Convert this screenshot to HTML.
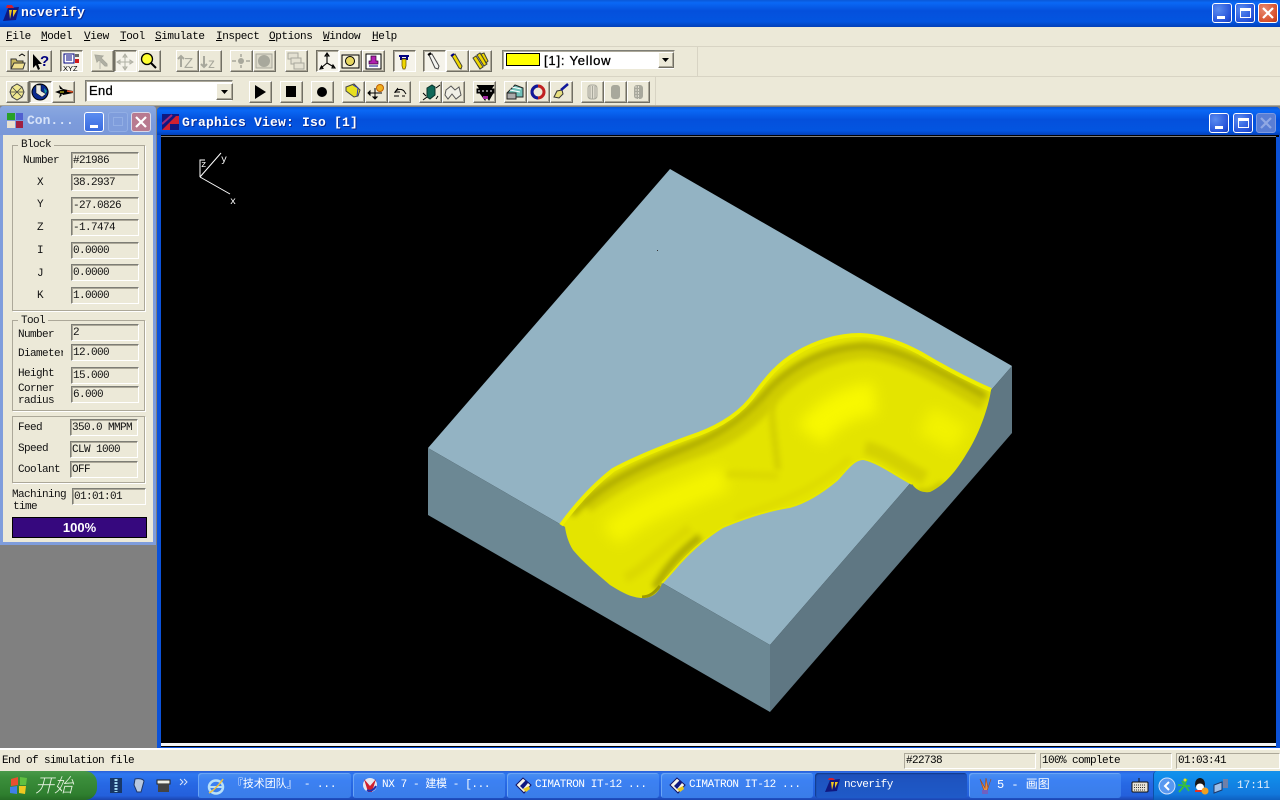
<!DOCTYPE html>
<html><head><meta charset="utf-8"><title>ncverify</title>
<style>
html,body{margin:0;padding:0;width:1280px;height:800px;overflow:hidden;background:#ece9d8}
*{box-sizing:border-box}
div,span{position:absolute;white-space:nowrap}
body{font-family:"Liberation Mono","Noto Sans CJK SC",monospace;font-size:11px;color:#000}
.t{letter-spacing:-.4px;line-height:12px}
.b{width:23px;height:22px;background:#ece9d8;border:1px solid;border-color:#fff #716f64 #716f64 #fff;box-shadow:inset -1px -1px 0 #aca899}
.p{border-color:#716f64 #fff #fff #716f64;box-shadow:inset 1px 1px 0 #aca899;background:#f5f3ea}
.f{background:#ece9d8;border:1px solid;border-color:#7d7d75 #fff #fff #7d7d75;box-shadow:inset 1px 1px 0 #aca899;height:17px;width:68px;font-size:11px;line-height:16px;padding-left:1px;letter-spacing:-.6px;color:#111}
.g{border:1px solid #aca899;box-shadow:1px 1px 0 #fff}
.l{font-size:11px;letter-spacing:-.6px;line-height:14px;color:#111}
.sb{border:1px solid;border-color:#aca899 #fff #fff #aca899;height:16px;top:753px;font-size:11px;line-height:15px;padding-left:1px;letter-spacing:-.6px}
.tb{top:773px;height:25px;width:154px;border-radius:3px;background:linear-gradient(#4b90f0,#3c81f3 30%,#3a7de8);color:#fff;font-size:11px;line-height:24px;box-shadow:inset 1px 1px 0 #6aa5f5;letter-spacing:-.4px}
.wb{width:20px;height:20px;border:1px solid #fff;border-radius:3px;background:radial-gradient(circle at 30% 30%,#5a8cf0,#2450d8 75%,#1a3cb0)}
.h{color:#fff;font-weight:bold;font-size:13px;line-height:14px;letter-spacing:.2px;text-shadow:1px 1px 0 #0a2a90}
</style></head><body>

<!-- main title -->
<div style="left:0;top:0;width:1280px;height:27px;background:linear-gradient(#0a58d8 0,#0a68f5 10%,#0450dc 40%,#0355e0 80%,#0340b8 100%)"></div>
<svg style="position:absolute;left:2px;top:4px" width="18" height="18"><path d="M1 17L6 4l11-1-3 13z" fill="#101880"/><path d="M7 6h3l-2 9zM11 6h4l-4 7z" fill="#f0c820"/><path d="M4 4h8l-2-3H5z" fill="#d02030"/></svg>
<div class="h" style="left:21px;top:6px">ncverify</div>
<div class="wb" style="left:1212px;top:3px"><span style="left:4px;top:12px;width:8px;height:3px;background:#fff"></span></div>
<div class="wb" style="left:1235px;top:3px"><span style="left:4px;top:4px;width:11px;height:10px;border:1px solid #fff;border-top:3px solid #fff"></span></div>
<div class="wb" style="left:1258px;top:3px;background:radial-gradient(circle at 30% 30%,#e88a70,#d8502c 70%,#b83818)"><svg style="position:absolute;left:2px;top:2px" width="14" height="14"><path d="M2 2L12 12M12 2L2 12" stroke="#fff" stroke-width="2.2"/></svg></div>

<!-- menu -->
<div style="left:0;top:27px;width:1280px;height:20px;background:#ece9d8;border-bottom:1px solid #d8d4c4"></div>
<div class="t" style="left:6px;top:31px"><u>F</u>ile</div>
<div class="t" style="left:41px;top:31px"><u>M</u>odel</div>
<div class="t" style="left:84px;top:31px"><u>V</u>iew</div>
<div class="t" style="left:120px;top:31px"><u>T</u>ool</div>
<div class="t" style="left:155px;top:31px"><u>S</u>imulate</div>
<div class="t" style="left:216px;top:31px"><u>I</u>nspect</div>
<div class="t" style="left:269px;top:31px"><u>O</u>ptions</div>
<div class="t" style="left:323px;top:31px"><u>W</u>indow</div>
<div class="t" style="left:372px;top:31px"><u>H</u>elp</div>

<!-- toolbar frames -->
<div style="left:0;top:47px;width:698px;height:30px;border-right:1px solid #d8d4c4"></div>
<div style="left:0;top:76px;width:1280px;height:1px;background:#d8d4c4"></div>
<div style="left:0;top:77px;width:656px;height:28px;border-right:1px solid #d8d4c4"></div>

<!-- row1 buttons -->
<div class="b" style="left:6px;top:50px"></div><div class="b" style="left:29px;top:50px"></div>
<div class="b p" style="left:60px;top:50px"></div>
<div class="b" style="left:91px;top:50px"></div><div class="b p" style="left:114px;top:50px"></div><div class="b" style="left:138px;top:50px"></div>
<div class="b" style="left:176px;top:50px"></div><div class="b" style="left:199px;top:50px"></div>
<div class="b" style="left:230px;top:50px"></div><div class="b" style="left:253px;top:50px"></div>
<div class="b" style="left:285px;top:50px"></div>
<div class="b p" style="left:316px;top:50px"></div><div class="b" style="left:339px;top:50px"></div><div class="b" style="left:362px;top:50px"></div>
<div class="b p" style="left:393px;top:50px"></div>
<div class="b p" style="left:423px;top:50px"></div><div class="b" style="left:446px;top:50px"></div><div class="b" style="left:469px;top:50px"></div>
<!-- colour combo -->
<div style="left:502px;top:50px;width:173px;height:20px;background:#fff;border:1px solid;border-color:#7d7d75 #ece9d8 #ece9d8 #7d7d75;box-shadow:inset 1px 1px 0 #aca899"></div>
<div style="left:506px;top:53px;width:34px;height:13px;background:#ffff00;border:1px solid #000"></div>
<div style="left:544px;top:53px;font-family:'Liberation Sans',sans-serif;font-size:13px;line-height:15px;letter-spacing:.8px;-webkit-text-stroke:.3px #000">[1]: Yellow</div>
<div class="b" style="left:658px;top:52px;width:16px;height:16px"></div>
<svg style="position:absolute;left:662px;top:58px" width="8" height="5"><path d="M0 0H7L3.5 4z" fill="#000"/></svg>

<!-- row2 buttons -->
<div class="b" style="left:6px;top:81px"></div><div class="b p" style="left:29px;top:81px"></div><div class="b" style="left:52px;top:81px"></div>
<div style="left:85px;top:80px;width:148px;height:22px;background:#fff;border:1px solid;border-color:#7d7d75 #ece9d8 #ece9d8 #7d7d75;box-shadow:inset 1px 1px 0 #aca899;font-family:'Liberation Sans',sans-serif;font-size:13px;line-height:19px;padding-left:3px;-webkit-text-stroke:.3px #000;letter-spacing:.3px">End</div>
<div class="b" style="left:216px;top:83px;width:17px;height:17px"></div>
<svg style="position:absolute;left:221px;top:90px" width="8" height="5"><path d="M0 0H7L3.5 4z" fill="#000"/></svg>
<div class="b" style="left:249px;top:81px"></div><div class="b" style="left:280px;top:81px"></div><div class="b" style="left:311px;top:81px"></div>
<div class="b" style="left:342px;top:81px"></div><div class="b" style="left:365px;top:81px"></div><div class="b" style="left:388px;top:81px"></div>
<div class="b" style="left:419px;top:81px"></div><div class="b" style="left:442px;top:81px"></div>
<div class="b" style="left:473px;top:81px"></div>
<div class="b" style="left:504px;top:81px"></div><div class="b" style="left:527px;top:81px"></div><div class="b" style="left:550px;top:81px"></div>
<div class="b" style="left:581px;top:81px"></div><div class="b" style="left:604px;top:81px"></div><div class="b" style="left:627px;top:81px"></div>

<!-- toolbar icons -->
<svg style="position:absolute;left:0;top:0;z-index:3" width="700" height="105" fill="none">
<!-- open -->
<path d="M11 59h5l1 2h6v8H11z" fill="#c8b860" stroke="#333"/><path d="M11 69l3-6h11l-2 6z" fill="#f0e090" stroke="#333"/><path d="M19 56l3-2 3 2" stroke="#000"/>
<!-- help -->
<path d="M33 54v14l3-3 2 5 2-1-2-5h4z" fill="#000"/><text x="40" y="66" font-family="Liberation Sans" font-size="15" font-weight="bold" fill="#000080">?</text>
<!-- xyz -->
<rect x="64" y="54" width="10" height="9" fill="#fff" stroke="#000080"/><path d="M66 56h6M66 58h6M66 60h6" stroke="#000080"/><rect x="75" y="54" width="4" height="3" fill="#666"/><rect x="75" y="59" width="4" height="4" fill="#d01818"/>
<text x="63" y="71" font-family="Liberation Sans" font-size="7.5" fill="#000">XYZ</text>
<!-- select -->
<path d="M95 55l8 1-2 2 6 6v2h-2l-6-6-2 2z" fill="#b0b0a4" stroke="#a8a89c"/><path d="M100 61v8" stroke="#b8b8ac"/>
<!-- pan -->
<path d="M125 54v16M117 62h16M125 54l-2 3h4zM125 70l-2-3h4zM117 62l3-2v4zM133 62l-3-2v4z" stroke="#b0b0a4"/>
<!-- zoom -->
<circle cx="147" cy="59" r="5.5" fill="#ffff30" stroke="#000" stroke-width="1.3"/><path d="M151 63l5 5" stroke="#000" stroke-width="2"/>
<!-- tZ -->
<path d="M181 67V56M178 59l3-3 3 3" stroke="#a8a89c" stroke-width="2"/><text x="184" y="68" font-family="Liberation Sans" font-size="15" fill="#a8a89c">Z</text>
<path d="M204 56v11M201 64l3 3 3-3" stroke="#a8a89c" stroke-width="2"/><text x="208" y="68" font-family="Liberation Sans" font-size="14" fill="#a8a89c">z</text>
<circle cx="241" cy="61" r="3" fill="#a8a89c"/><path d="M232 61h4M246 61h4M241 54v3M241 65v3" stroke="#a8a89c" stroke-width="1.5"/>
<rect x="256" y="54" width="16" height="14" fill="#dcd9c9" stroke="#a8a89c"/><circle cx="264" cy="61" r="6" fill="#a8a89c"/>
<rect x="288" y="53" width="10" height="6" fill="#e4e1d2" stroke="#a8a89c"/><rect x="291" y="58" width="10" height="6" fill="#e4e1d2" stroke="#a8a89c"/><rect x="294" y="63" width="10" height="6" fill="#e4e1d2" stroke="#a8a89c"/>
<!-- axes -->
<path d="M327 54v9M327 63l7 4M327 63l-6 5M327 53l-2 3h4zM335 68l-3 0 1-3zM320 69l3-.5-1.5-2.5z" stroke="#000" stroke-width="1.1"/>
<!-- camera -->
<path d="M342 55h17v13h-17z" fill="#f4f0d8" stroke="#000"/><circle cx="350" cy="61" r="4.5" fill="#e8d860" stroke="#000"/>
<!-- stamp -->
<rect x="366" y="54" width="15" height="15" fill="#fff" stroke="#000"/><path d="M371 56h5v5h2v3h-9v-3h2z" fill="#b020b0" stroke="#300030" stroke-width=".7"/><path d="M369 66h9" stroke="#000080"/>
<!-- T tool -->
<path d="M399 56h10M401 56v3h6v-3" stroke="#000080" stroke-width="2"/><path d="M402 59h4v7l-1 3h-2l-1-3z" fill="#f0d800" stroke="#604800" stroke-width=".7"/>
<!-- tools -->
<path d="M429 55l3-1 7 12-1 3-3-1z" fill="#f4f4f0" stroke="#444"/><path d="M428 55l3-2" stroke="#000" stroke-width="2"/>
<path d="M452 56l3-2 7 12-1 3-2-1z" fill="#f0d800" stroke="#443"/><path d="M451 56l3-2" stroke="#000080" stroke-width="2"/>
<path d="M473 58l3-2 7 11-3 2zM477 55l3-2 7 11-3 2zM481 54l3-1 4 8-2 2z" fill="#f0d800" stroke="#443"/>
<!-- row2 -->
<path d="M12 87l5-3 5 3 2 5-2 5-5 3-5-3-2-5z" fill="#f0e890" stroke="#444"/><path d="M12 87l10 10M22 87L12 97M10 92h14" stroke="#444" stroke-width=".8"/>
<path d="M40 84a8 8 0 1 0 .1 0z" fill="#0a2a90" stroke="#000"/><path d="M36 85v8l6 4 4-3-5-3v-6z" fill="#e8e8e0" stroke="#000" stroke-width=".5"/><path d="M44 88l3 3-2 3z" fill="#18a0a0"/>
<path d="M55 92l8-3 10 2 0 2-10 2zM59 85l4 4h-3zM59 98l4-4h-3z" fill="#000"/><path d="M67 91l6 1" stroke="#e05020" stroke-width="1.5"/><path d="M60 92h4" stroke="#e8e020"/>
<path d="M255 85l11 7-11 7z" fill="#000"/><rect x="286" y="86" width="10" height="11" fill="#000"/><circle cx="322" cy="92" r="5" fill="#000"/>
<path d="M346 87l8-3 6 6-2 6-4 1-8-6z" fill="#e8e020" stroke="#444"/><path d="M353 85l5 3-1 8" stroke="#2838c0"/>
<path d="M368 93h14M375 88v11M368 93l2-2v4zM375 99l-2-2h4z" stroke="#000"/><circle cx="380" cy="88" r="3.5" fill="#f0b020" stroke="#c06000"/>
<path d="M394 96h5M402 96h3M395 93a5 4 0 0 1 9-2l2 3M398 88l-3 4 5 0" stroke="#000"/>
<path d="M427 88l5-3 3 2v8l-5 4-3-2z" fill="#106858" stroke="#083028"/><path d="M423 100l4-3M440 85l-4 3M423 93l3 3M438 96l-2 3" stroke="#000"/>
<path d="M446 90l5-4 4 4 4-3 2 8-5 4-4-5-4 5-3-4z" fill="#f0efe6" stroke="#555"/>
<path d="M477 85l3 4h11l3-4M477 89h17v4h-17zM480 93l5 7 1-4 3 4 4-7" fill="#000" stroke="#000"/><path d="M479 90v2M483 90v2M487 90v2M491 90v2" stroke="#fff"/><path d="M483 96h5v3h-5z" fill="#a028a0"/>
<path d="M507 93l8-8 8 3v9h-16z" fill="#70c0b8" stroke="#222"/><path d="M510 90l10 2M512 87l9 2" stroke="#fff"/><path d="M507 93l0 6h9v-6z" fill="#aaa" stroke="#222"/>
<circle cx="538" cy="92" r="6" stroke="#c02020" stroke-width="3"/><path d="M538 86a6 6 0 0 0 0 12" stroke="#10189a" stroke-width="3"/>
<path d="M554 97l3-6 5-1 1 4-4 4z" fill="#e8e080" stroke="#333"/><path d="M561 90l7-6" stroke="#10189a" stroke-width="2.5"/>
<rect x="588" y="85" width="9" height="14" rx="3" fill="#e0ddd0" stroke="#a8a89c"/><path d="M590 86v13M592.5 86v13M595 86v13" stroke="#a8a89c"/>
<rect x="611" y="85" width="9" height="14" rx="3" fill="#a8a89c"/>
<rect x="634" y="85" width="9" height="14" rx="3" fill="#a8a89c"/><path d="M636 86v13M638.5 86v13" stroke="#e0ddd0" stroke-dasharray="2 1"/>
</svg>

<!-- MDI -->
<div style="left:0;top:105px;width:1280px;height:645px;background:#808080"></div>
<div style="left:0;top:105px;width:1280px;height:1px;background:#aca899"></div>

<!-- Control window -->
<div style="left:0;top:106px;width:156px;height:439px;background:#ece9d8;border:3px solid #7f9ddc;border-radius:3px 3px 0 0"></div>
<div style="left:0;top:106px;width:156px;height:29px;background:linear-gradient(#8aa8e0,#7d9cdc 50%,#7a98d8);border-radius:4px 4px 0 0"></div>
<svg style="position:absolute;left:7px;top:113px" width="17" height="16"><rect x="0" y="0" width="8" height="7" fill="#28a028"/><rect x="9" y="0" width="7" height="7" fill="#5060d0"/><rect x="0" y="8" width="8" height="7" fill="#e8e0d0"/><rect x="9" y="8" width="7" height="7" fill="#a02040"/></svg>
<div style="left:27px;top:114px;color:#d6e2f8;font-weight:bold;font-size:13px;line-height:14px;letter-spacing:0">Con...</div>
<div class="wb" style="left:84px;top:112px;background:linear-gradient(#5a8cf0,#3a6ce0)"><span style="left:5px;top:12px;width:8px;height:3px;background:#fff"></span></div>
<div class="wb" style="left:108px;top:112px;background:#7f9ddc;border-color:#92aee4"><span style="left:4px;top:4px;width:10px;height:9px;border:1px solid #92aee4"></span></div>
<div class="wb" style="left:131px;top:112px;background:#b87a90;border-color:#d8d8e8"><svg style="position:absolute;left:2px;top:2px" width="14" height="14"><path d="M2 2L12 12M12 2L2 12" stroke="#fff" stroke-width="2.2"/></svg></div>

<div class="g" style="left:12px;top:145px;width:133px;height:166px"></div>
<div class="l" style="left:18px;top:138px;background:#ece9d8;padding:0 3px">Block</div>
<div class="l" style="left:23px;top:154px">Number</div><div class="f" style="left:71px;top:152px">#21986</div>
<div class="l" style="left:37px;top:176px">X</div><div class="f" style="left:71px;top:174px">38.2937</div>
<div class="l" style="left:37px;top:198px">Y</div><div class="f" style="left:71px;top:197px">-27.0826</div>
<div class="l" style="left:37px;top:221px">Z</div><div class="f" style="left:71px;top:219px">-1.7474</div>
<div class="l" style="left:37px;top:244px">I</div><div class="f" style="left:71px;top:242px">0.0000</div>
<div class="l" style="left:37px;top:267px">J</div><div class="f" style="left:71px;top:264px">0.0000</div>
<div class="l" style="left:37px;top:289px">K</div><div class="f" style="left:71px;top:287px">1.0000</div>

<div class="g" style="left:12px;top:320px;width:133px;height:91px"></div>
<div class="l" style="left:18px;top:314px;background:#ece9d8;padding:0 3px">Tool</div>
<div class="l" style="left:18px;top:328px">Number</div><div class="f" style="left:71px;top:324px">2</div>
<div class="l" style="left:18px;top:347px;width:45px;overflow:hidden">Diameter</div><div class="f" style="left:71px;top:344px">12.000</div>
<div class="l" style="left:18px;top:367px">Height</div><div class="f" style="left:71px;top:367px">15.000</div>
<div class="l" style="left:18px;top:382px">Corner</div><div class="f" style="left:71px;top:386px">6.000</div>
<div class="l" style="left:18px;top:394px">radius</div>

<div class="g" style="left:12px;top:416px;width:133px;height:67px"></div>
<div class="l" style="left:18px;top:421px">Feed</div><div class="f" style="left:70px;top:419px">350.0 MMPM</div>
<div class="l" style="left:18px;top:442px">Speed</div><div class="f" style="left:70px;top:441px">CLW 1000</div>
<div class="l" style="left:18px;top:463px">Coolant</div><div class="f" style="left:70px;top:461px">OFF</div>

<div class="l" style="left:12px;top:488px">Machining</div><div class="l" style="left:13px;top:500px">time</div>
<div class="f" style="left:72px;top:488px;width:74px">01:01:01</div>
<div style="left:12px;top:517px;width:135px;height:21px;background:#36087e;border:1px solid #000;color:#fff;text-align:center;font-family:'Liberation Sans',sans-serif;font-weight:bold;font-size:13px;line-height:19px">100%</div>

<!-- Graphics window -->
<div style="left:157px;top:107px;width:1123px;height:641px;background:#0c52d8;border-radius:4px 4px 0 0"></div>
<div style="left:157px;top:107px;width:1123px;height:28px;background:linear-gradient(#0a58d8,#0a68f5 12%,#0450dc 45%,#0355e0 85%,#0340b8);border-radius:4px 4px 0 0"></div>
<svg style="position:absolute;left:162px;top:114px" width="17" height="16"><rect width="17" height="16" fill="#101880"/><path d="M0 16L14 2l3 0v8H8v6z" fill="#d02030"/><path d="M0 10L10 1" stroke="#a02878" stroke-width="2"/></svg>
<div class="h" style="left:182px;top:116px">Graphics View: Iso [1]</div>
<div class="wb" style="left:1209px;top:113px"><span style="left:5px;top:12px;width:8px;height:3px;background:#fff"></span></div>
<div class="wb" style="left:1233px;top:113px"><span style="left:4px;top:4px;width:11px;height:10px;border:1px solid #fff;border-top:3px solid #fff"></span></div>
<div class="wb" style="left:1256px;top:113px;background:#5a7ed4;border-color:#7e9ae0"><svg style="position:absolute;left:2px;top:2px" width="14" height="14"><path d="M2 2L12 12M12 2L2 12" stroke="#90a8e4" stroke-width="2.2"/></svg></div>

<!-- canvas -->
<svg style="position:absolute;left:159px;top:135px" width="1120" height="612" viewBox="159 135 1120 612">
<defs>
<clipPath id="ch"><path d="M560 524C572 510 590 488 613 470C635 458 660 448 690 437C712 430 735 418 750 400C762 385 775 365 797 353C815 342 838 335 860 335C885 336 905 345 920 353C945 368 968 380 991 390C988 410 978 436 967 453C957 470 945 485 930 492C922 493 916 490 912 484C895 475 878 462 863 459C852 460 845 472 837 480C825 490 808 502 790 507C770 510 745 518 723 527C705 538 692 550 680 563C672 572 667 578 662 583C659 593 652 598 643 598C632 598 623 593 610 585C595 572 583 562 573 550C568 542 566 534 565 527Z"/></clipPath>
<filter id="b3" filterUnits="userSpaceOnUse" x="530" y="310" width="500" height="310"><feGaussianBlur stdDeviation="3"/></filter>
<filter id="b6" filterUnits="userSpaceOnUse" x="530" y="310" width="500" height="310"><feGaussianBlur stdDeviation="7"/></filter>
</defs>
<rect x="159" y="135" width="1120" height="612" fill="#000"/>
<rect x="159" y="135" width="2" height="612" fill="#0c52d8"/>
<rect x="161" y="743" width="1115" height="3" fill="#f4f4f4"/>
<rect x="1276" y="137" width="3" height="610" fill="#0c52d8"/>
<rect x="161" y="136" width="1115" height="1" fill="#7f7f7f"/>
<!-- axes -->
<g stroke="#fff" fill="none"><path d="M200 177l30 17M200 177l21-24M200 177v-17l5 0"/></g>
<text x="201" y="167" font-family="Liberation Mono" font-size="9" fill="#fff">z</text>
<text x="221" y="162" font-family="Liberation Mono" font-size="10" fill="#fff">y</text>
<text x="230" y="204" font-family="Liberation Mono" font-size="10" fill="#fff">x</text>
<!-- block -->
<path d="M670 169L1012 366 770 645 428 448z" fill="#93b3c3"/>
<path d="M428 448L770 645V712L428 515z" fill="#6c8894"/>
<path d="M770 645L1012 366V433L770 712z" fill="#5f7783"/>
<rect x="657" y="250" width="1" height="1" fill="#333"/>
<!-- channel -->
<g clip-path="url(#ch)">
<rect x="550" y="325" width="470" height="285" fill="#e4e400"/>
<!-- upper wall bands -->
<path d="M585 505C620 478 650 465 695 449C728 438 752 420 772 395C800 365 835 352 865 350C900 351 945 378 985 402" stroke="#cfcc00" stroke-width="18" fill="none" filter="url(#b3)"/>
<path d="M572 515C600 487 625 472 690 446C725 432 750 412 770 388C800 358 835 347 865 346C895 348 930 365 985 396" stroke="#aaa700" stroke-width="5" fill="none" filter="url(#b3)"/>
<!-- bright centre -->
<path d="M610 535C640 510 670 500 725 478" stroke="#f4f400" stroke-width="26" fill="none" filter="url(#b6)"/>
<path d="M810 435C825 415 845 402 875 398" stroke="#f8f800" stroke-width="32" fill="none" filter="url(#b6)"/>
<path d="M925 420C935 425 945 430 960 440" stroke="#f2f200" stroke-width="30" fill="none" filter="url(#b6)"/>
<!-- mid folds -->
<path d="M772 400C771 420 775 440 778 470" stroke="#d2cf00" stroke-width="6" fill="none" filter="url(#b3)"/>
<path d="M727 474L778 476" stroke="#dcd900" stroke-width="8" fill="none" filter="url(#b3)"/>
<!-- lower wall -->
<path d="M655 588C665 570 680 552 700 537" stroke="#b0ad00" stroke-width="8" fill="none" filter="url(#b3)"/>
<path d="M625 578C640 572 660 550 690 528" stroke="#dcd900" stroke-width="10" fill="none" filter="url(#b3)"/>
<path d="M735 518C770 505 810 495 850 458" stroke="#dedb00" stroke-width="6" fill="none" filter="url(#b3)"/>
<path d="M865 448C885 452 900 465 925 478" stroke="#d4d100" stroke-width="14" fill="none" filter="url(#b3)"/>
<path d="M918 490C925 494 935 490 942 483" stroke="#b0ae00" stroke-width="3" fill="none" filter="url(#b3)"/>
<path d="M642 597C650 597 655 592 660 586" stroke="#9c9a00" stroke-width="3" fill="none"/>
</g>
<!-- rims -->
<path d="M561 525C572 510 590 488 613 470C635 458 660 448 690 437C712 430 735 418 750 400C762 385 775 365 797 353C815 342 838 335 860 335C885 336 905 345 920 353C945 368 968 380 991 390" stroke="#eeee00" stroke-width="4" fill="none"/>
<path d="M912 484C895 475 878 462 863 459C852 460 845 472 837 480C825 490 808 502 790 507C770 510 745 518 723 527C705 538 692 550 680 563C672 572 667 578 662 583" stroke="#e8e800" stroke-width="1.8" fill="none"/>
</svg>

<!-- status bar -->
<div style="left:0;top:748px;width:1280px;height:2px;background:#fff"></div>
<div style="left:0;top:750px;width:1280px;height:22px;background:#ece9d8"></div>
<div class="t" style="left:2px;top:755px;letter-spacing:-.6px">End of simulation file</div>
<div class="sb" style="left:904px;width:132px">#22738</div>
<div class="sb" style="left:1040px;width:132px">100% complete</div>
<div class="sb" style="left:1176px;width:104px">01:03:41</div>

<!-- taskbar -->
<div style="left:0;top:771px;width:1280px;height:29px;background:linear-gradient(#2a60d8 0,#2f78f0 10%,#2768e4 45%,#2460dc 85%,#1b45b0)"></div>
<div style="left:0;top:771px;width:97px;height:29px;background:linear-gradient(#4a9a4a,#3c8f3c 20%,#2f7f2f 80%,#256c25);border-radius:0 12px 12px 0"></div>
<svg style="position:absolute;left:9px;top:776px" width="20" height="20"><path d="M2 3l7-2v8l-7 1z" fill="#e85030"/><path d="M11 1l7 1-1 7-6 0z" fill="#60c040"/><path d="M1 11l7-1v8l-7-1z" fill="#4080e8"/><path d="M10 10h7l-1 8-6-1z" fill="#f0c820"/></svg>
<div style="left:35px;top:773px;color:#e6f2e0;font-family:'Noto Sans CJK SC',sans-serif;font-size:19px;line-height:24px;font-style:italic;font-weight:300">开始</div>
<svg style="position:absolute;left:108px;top:776px" width="88" height="20"><rect x="2" y="2" width="12" height="15" fill="#183868"/><path d="M8 3v13" stroke="#a0d8f0" stroke-width="3" stroke-dasharray="2 1"/><path d="M27 3c4-1 8 0 9 2l-3 11-4 0-3-7z" fill="#b8c8e0" stroke="#203868"/><rect x="49" y="4" width="13" height="4" fill="#f0f0e8" stroke="#222"/><rect x="50" y="8" width="11" height="8" fill="#444"/><path d="M72 3l3 3-3 3M76 3l3 3-3 3" stroke="#d8e4f8" fill="none"/></svg>

<div class="tb" style="left:198px;width:153px;font-family:'Liberation Mono','Noto Sans CJK SC',monospace;padding-left:34px;font-size:11px;letter-spacing:-.1px">『技术团队』 - ...</div>
<svg style="position:absolute;left:207px;top:777px" width="18" height="18"><ellipse cx="9" cy="10" rx="7" ry="6.5" fill="none" stroke="#b8e0f8" stroke-width="2.5"/><path d="M3 10h12" stroke="#b8e0f8" stroke-width="2"/><path d="M2 16C6 14 13 7 16 2" stroke="#f0c040" stroke-width="1.5" fill="none"/></svg>
<div class="tb" style="left:353px;width:152px;padding-left:29px;font-family:'Liberation Mono','Noto Sans CJK SC',monospace">NX 7 - 建模 - [...</div>
<svg style="position:absolute;left:362px;top:777px" width="16" height="16"><circle cx="8" cy="8" r="7" fill="#e8e8f0"/><path d="M2 2l6 7 6-7-4 13H6z" fill="#d02030"/><path d="M5 13c3 2 7 0 9-4" stroke="#2030b0" stroke-width="2" fill="none"/></svg>
<div class="tb" style="left:507px;width:152px;padding-left:28px;letter-spacing:-.4px">CIMATRON IT-12 ...</div>
<svg style="position:absolute;left:515px;top:777px" width="17" height="17"><path d="M1 8l7-7 8 7-7 8z" fill="#f4f4ec" stroke="#101060"/><path d="M5 9l6-6 2 3-5 6z" fill="#101880"/><path d="M8 12l6-3 1 3-4 3z" fill="#e8c820"/></svg>
<div class="tb" style="left:661px;width:152px;padding-left:28px">CIMATRON IT-12 ...</div>
<svg style="position:absolute;left:669px;top:777px" width="17" height="17"><path d="M1 8l7-7 8 7-7 8z" fill="#f4f4ec" stroke="#101060"/><path d="M5 9l6-6 2 3-5 6z" fill="#101880"/><path d="M8 12l6-3 1 3-4 3z" fill="#e8c820"/></svg>
<div class="tb" style="left:815px;width:152px;padding-left:29px;background:linear-gradient(#1c50b8,#1e54c0 30%,#1f5ac8);box-shadow:inset 1px 1px 1px #123a88;letter-spacing:-.5px">ncverify</div>
<svg style="position:absolute;left:824px;top:777px" width="17" height="17"><path d="M1 15L6 3l10-1-3 12z" fill="#101880"/><path d="M7 5h3l-2 8zM11 5h3l-3 6z" fill="#f0c820"/><path d="M4 3h7l-2-2H5z" fill="#d02030"/></svg>
<div class="tb" style="left:969px;width:152px;padding-left:28px;font-family:'Liberation Mono','Noto Sans CJK SC',monospace;font-size:12px;letter-spacing:0">5 - 画图</div>
<svg style="position:absolute;left:978px;top:777px" width="14" height="18"><path d="M2 2l4 12h3l4-12-3 9-2-10-1 10z" fill="#e89048" stroke="#a04818" stroke-width=".6"/><rect x="4" y="13" width="6" height="4" fill="#7060c0"/></svg>

<!-- tray -->
<div style="left:1153px;top:771px;width:127px;height:29px;background:linear-gradient(#1890e8,#1090ec 10%,#1278dc 80%,#0e60c0);border-left:1px solid #0c50a8;border-radius:4px 0 0 0"></div>
<svg style="position:absolute;left:1130px;top:776px" width="150" height="20">
<rect x="2" y="6" width="16" height="10" rx="1" fill="#e8e4d8" stroke="#111"/><path d="M4 9h12M4 11.5h12M4 14h12" stroke="#333" stroke-dasharray="1 1"/><path d="M9 6V2" stroke="#111"/>
<circle cx="37" cy="10" r="8" fill="#5898f0" stroke="#cfe2fb"/><path d="M39 6l-4 4 4 4" stroke="#fff" stroke-width="2" fill="none"/>
<path d="M49 16l5-6 3-7M52 5l7 10M48 9l12 1" stroke="#38c040" stroke-width="1.8"/><circle cx="55" cy="4" r="1.5" fill="#f0e020"/>
<ellipse cx="70" cy="8" rx="5" ry="6" fill="#151515"/><ellipse cx="70" cy="11" rx="4" ry="3.5" fill="#fff"/><path d="M65 14h10v2H65z" fill="#e83020"/><circle cx="75" cy="15" r="3.5" fill="#f0a020"/>
<path d="M84 9l8-3v8l-8 3z" fill="#a0c0e8" stroke="#203868"/><rect x="93" y="3" width="5" height="9" fill="#7080a8"/>
</svg>
<div style="left:1237px;top:779px;color:#e8f0fa;font-size:11px;line-height:14px;letter-spacing:0">17:11</div>
</body></html>
